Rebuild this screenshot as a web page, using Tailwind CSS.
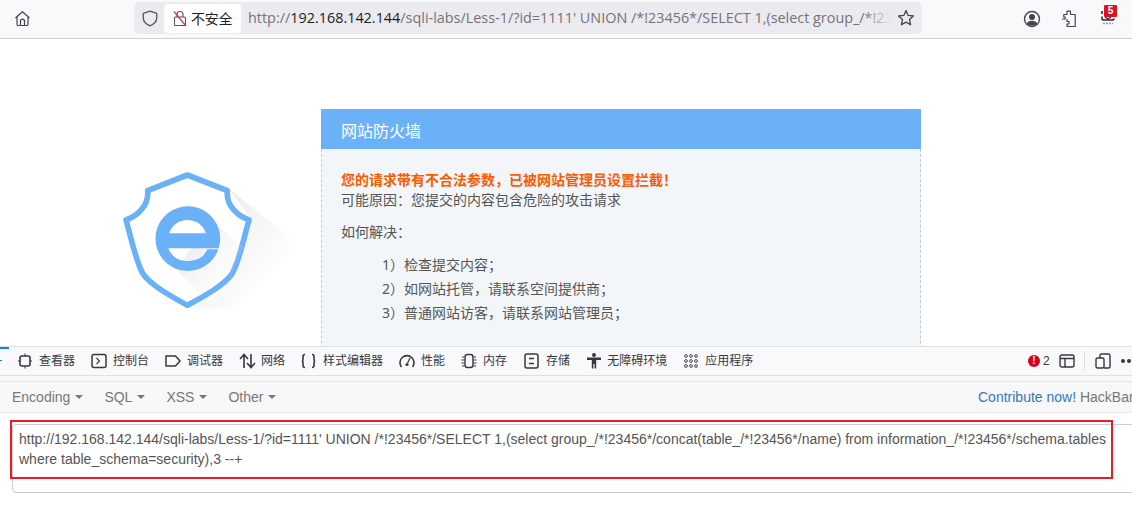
<!DOCTYPE html>
<html>

<head>
  <meta charset="UTF-8" />
  <meta name="viewport" content="width=device-width, initial-scale=1.0" />
  <script src="https://cdn.jsdelivr.net/npm/@tailwindcss/browser@4"></script>
  <title>网站防火墙</title>
</head>

<body class="bg-white overflow-hidden font-['Noto_Sans','Noto_Sans_CJK_SC',sans-serif]">
  <div class="relative w-[1132px] h-[507px] overflow-hidden flex flex-col">
    <!-- browser toolbar -->
    <div class="h-[39px] shrink-0 bg-[#f9f9fb] border-b border-[#cfcfd4] flex items-start">
      <div class="w-[134px] h-[38px] shrink-0 pl-[14px] pt-[10px]">
        <svg width="17" height="17" viewBox="0 0 17 17" fill="none" stroke="#45454f" stroke-width="1.2" stroke-linejoin="round">
          <path d="M1.5 8 8.5 1.8 15.5 8M3 7v7.2q0 1.3 1.3 1.3h8.4q1.3 0 1.3-1.3V7" />
          <path d="M6.5 15.5v-4.3q0-2 2-2t2 2v4.3" />
        </svg>
      </div>
      <div class="w-[788px] h-[32px] mt-[2px] shrink-0 bg-[#ebebef] rounded-[5px] flex items-center pl-[8px] relative">
        <svg class="shrink-0" width="16" height="17" viewBox="0 0 16 17" fill="none" stroke="#55555f" stroke-width="1.3" stroke-linejoin="round">
          <path d="M8 1.2 14.7 3.4V8q0 5-6.7 7.8Q1.3 13 1.3 8V3.4Z" />
        </svg>
        <div class="ml-[6px] w-[77px] h-[29px] shrink-0 bg-white rounded-[4px] flex items-center pl-[9px] text-[14px] text-[#1f1f24] whitespace-nowrap">
          <svg class="shrink-0 mr-[4px]" width="14" height="17" viewBox="0 0 14 17" fill="none" stroke="#55555f" stroke-width="1.1">
            <rect x="1.5" y="7" width="11" height="8.5" rx="1" />
            <path d="M4 7V4.5q0-3 3-3t3 3V7" />
            <path d="M1 1.5 13 16" stroke="#e2325d" stroke-width="1.2" />
          </svg>
          <span class="tracking-[-0.2px]">不安全</span>
        </div>
        <div class="ml-[7px] w-[644px] shrink-0 overflow-hidden whitespace-nowrap text-[14.4px] text-[#73737b] font-['Open_Sans','Noto_Sans',sans-serif]">http://<span class="text-[#1c1c22]">192.168.142.144</span>/sqli-labs/Less-1/?id=1111' UNION /*!23456*/SELECT 1,(select group_/*!23</div>
        <div class="absolute left-[730px] top-0 w-[28px] h-[32px] bg-gradient-to-r from-[#ebebef]/0 to-[#ebebef]"></div>
        <svg class="absolute left-[763px] top-[7px]" width="18" height="18" viewBox="0 0 18 18" fill="none" stroke="#45454f" stroke-width="1.3" stroke-linejoin="round">
          <path d="M9 1.6 11.2 6.4 16.4 7 12.5 10.5 13.6 15.8 9 13.1 4.4 15.8 5.5 10.5 1.6 7 6.8 6.4Z" />
        </svg>
      </div>
      <div class="relative flex-1 h-[38px]">
        <svg class="absolute left-[101px] top-[10px]" width="18" height="18" viewBox="0 0 18 18">
          <circle cx="9" cy="9" r="7.5" fill="none" stroke="#45454f" stroke-width="1.4" />
          <circle cx="9" cy="7" r="3" fill="#45454f" />
          <path d="M3.8 13.5Q5 10.8 9 10.8t5.2 2.7Q12 15.8 9 15.8t-5.2-2.3Z" fill="#45454f" />
        </svg>
        <svg class="absolute left-[139px] top-[10px]" width="16" height="18" viewBox="0 0 16 18" fill="none" stroke="#45454f" stroke-width="1.2" stroke-linejoin="round">
          <path d="M1 9h3.2V7H2.8V4.5H6V1.2h3.5V4.5h4.7V16.5H6V14h2v-2.5H6V9" />
        </svg>
        <svg class="absolute left-[178px] top-[10px]" width="16" height="15" viewBox="0 0 16 15" fill="none" stroke="#2b2b30" stroke-width="1.6">
          <path d="M2 1v3M2 6.500v2Q2 10 4 10h8q2 0 2-1.500" />
          <path d="M5 7l3 2 3-2" stroke-width="1.2" />
          <path d="M3 13.500h10" stroke="#999" stroke-width="1.400" stroke-dasharray="2 1" />
        </svg>
        <div class="absolute left-[182px] top-[5px] w-[13px] h-[12px] bg-[#e0101f] text-white text-[10px] leading-[12px] font-bold text-center rounded-[1px] font-['Liberation_Sans',sans-serif]">5</div>
      </div>
    </div>

    <!-- blocked page -->
    <div class="h-[307px] shrink-0 overflow-hidden flex bg-white">
      <div class="w-[321px] shrink-0 pl-[100px] pt-[111px]">
        <svg width="220" height="190" viewBox="0 0 660 570">
          <defs>
            <linearGradient id="sh" x1="0.2" y1="0.2" x2="0.9" y2="0.8">
              <stop offset="0" stop-color="#dcdcdc" stop-opacity="0.6" />
              <stop offset="1" stop-color="#eeeeee" stop-opacity="0" />
            </linearGradient>
          </defs>
          <path d="M385 115 590 280 395 478 262 475 455 210Z" fill="url(#sh)" />
          <path d="M262 75 382 122C378 165 410 197 447 210 430 270 418 330 398 368 375 405 310 440 262 466 215 440 150 405 127 368 107 330 95 270 78 210 115 197 147 165 143 122Z" fill="white" stroke="#6bb1f8" stroke-width="17" stroke-linejoin="round" />
          <path d="M330 210 430 290 395 370 300 432 230 360Z" fill="url(#sh)" />
          <path fill-rule="evenodd" fill="#6bb1f8" d="M356 295A97 97 0 1 0 355 298L322 298C312 322 290 333 262 333 235 333 215 320 205 295ZM208 250C215 225 238 210 262 210 288 210 310 225 318 250Z" />
        </svg>
      </div>
      <div class="w-[600px] shrink-0 mt-[70px]">
        <div class="h-[40px] bg-[#6bb1f8] pl-[20px] text-[16px] leading-[44px] text-white">网站防火墙</div>
        <div class="h-[240px] bg-[#f3f6f9] border-x border-dashed border-[#c9c9c9] pl-[19px] pt-[21px] text-[14px] leading-[20px] text-[#555]">
          <p class="font-bold text-[#ff5a00]">您的请求带有不合法参数，已被网站管理员设置拦截！</p>
          <p>可能原因：您提交的内容包含危险的攻击请求</p>
          <p class="mt-[12px]">如何解决：</p>
          <ul class="mt-[11px] pl-[41px] leading-[24px]">
            <li>1）检查提交内容；</li>
            <li>2）如网站托管，请联系空间提供商；</li>
            <li>3）普通网站访客，请联系网站管理员；</li>
          </ul>
        </div>
      </div>
    </div>

    <!-- devtools tabs -->
    <div class="relative h-[30px] shrink-0 bg-[#f9f9fb] border-y border-[#e0e0e2] flex items-center pl-[18px] gap-[16px] text-[12px] text-[#38383d] whitespace-nowrap">
      <div class="absolute left-0 top-0 w-[9px] h-[2px] bg-[#0a84ff]"></div>
      <div class="absolute left-0 top-[13px] w-[2px] h-[1px] bg-[#0a84ff]"></div>
      <div class="flex items-center gap-[7px]">
        <svg width="14" height="16" viewBox="0 0 14 16" fill="none" stroke="#38383d" stroke-width="1.6">
          <rect x="2" y="3" width="10" height="10" rx="2" />
          <path d="M7 .5V3M7 13v2.5M0 8h2M12 8h2" stroke-width="1" />
        </svg>
        <span>查看器</span>
      </div>
      <div class="flex items-center gap-[6px]">
        <svg width="16" height="16" viewBox="0 0 16 16" fill="none" stroke="#38383d" stroke-width="1.5">
          <rect x="1" y="1.5" width="14" height="13" rx="2" />
          <path d="M5.5 5 8.5 8 5.5 11" stroke-width="1.1" />
        </svg>
        <span>控制台</span>
      </div>
      <div class="flex items-center gap-[6px]">
        <svg width="16" height="16" viewBox="0 0 16 16" fill="none" stroke="#38383d" stroke-width="1.5" stroke-linejoin="round">
          <path d="M1 3h9.5L15 8l-4.5 5H1Z" />
        </svg>
        <span>调试器</span>
      </div>
      <div class="flex items-center gap-[5px]">
        <svg width="17" height="16" viewBox="0 0 17 16" fill="none" stroke="#38383d" stroke-width="1.6">
          <path d="M5 15V2M1 6l4-4.500L9 6M12 1v13M8 10l4 4.500 4-4.500" />
        </svg>
        <span>网络</span>
      </div>
      <div class="flex items-center gap-[7px]">
        <svg width="15" height="16" viewBox="0 0 15 16" fill="none" stroke="#38383d" stroke-width="1.6">
          <path d="M4 1.5Q2 1.5 2 3.5V6Q2 8 .8 8 2 8 2 10v2.5q0 2 2 2M11 1.5q2 0 2 2V6q0 2 1.2 2Q13 8 13 10v2.5q0 2-2 2" />
        </svg>
        <span>样式编辑器</span>
      </div>
      <div class="flex items-center gap-[6px]">
        <svg width="16" height="16" viewBox="0 0 16 16" fill="none" stroke="#38383d" stroke-width="1.6">
          <path d="M2.5 14A7 7 0 1 1 13.5 14" />
          <path d="M11 5 8.6 10" stroke-width="1.2" />
          <circle cx="8" cy="11.5" r="1.6" fill="#38383d" stroke="none" />
        </svg>
        <span>性能</span>
      </div>
      <div class="flex items-center gap-[6px]">
        <svg width="16" height="16" viewBox="0 0 16 16" fill="none" stroke="#38383d" stroke-width="1.5">
          <rect x="4" y="1.5" width="8" height="13" rx="2.5" />
          <path d="M1 4h2M.5 7h2.500M.5 10h2.500M1 13h2M13 4h2M13 7h2.500M13 10h2.500M13 13h2" stroke-width="1" />
        </svg>
        <span>内存</span>
      </div>
      <div class="ml-[1px] flex items-center gap-[7px]">
        <svg width="15" height="16" viewBox="0 0 15 16" fill="none" stroke="#38383d" stroke-width="1.5">
          <rect x="1" y="1" width="13" height="14" rx="2" />
          <path d="M5 5.500h5M5 10.500h5" />
        </svg>
        <span>存储</span>
      </div>
      <div class="ml-[1px] flex items-center gap-[6px]">
        <svg width="14" height="16" viewBox="0 0 14 16" fill="#38383d">
          <circle cx="7" cy="2" r="2" />
          <path d="M0 4.500h14V7H9.200v8.500H7.600V11H6.400v4.500H4.800V7H0Z" />
        </svg>
        <span>无障碍环境</span>
      </div>
      <div class="ml-[1px] flex items-center gap-[7px]">
        <svg width="14" height="14" viewBox="0 0 14 14" fill="none" stroke="#38383d" stroke-width="0.9">
          <circle cx="2" cy="2" r="1.400" /><circle cx="7" cy="2" r="1.400" /><circle cx="12" cy="2" r="1.400" />
          <circle cx="2" cy="7" r="1.400" /><circle cx="7" cy="7" r="1.400" /><circle cx="12" cy="7" r="1.400" />
          <circle cx="2" cy="12" r="1.400" /><circle cx="7" cy="12" r="1.400" /><circle cx="12" cy="12" r="1.400" />
        </svg>
        <span>应用程序</span>
      </div>
      <div class="absolute left-[1028px] top-0 h-[28px] w-[104px] flex items-center overflow-hidden">
        <div class="w-[12px] h-[12px] shrink-0 rounded-full bg-[#d70022] text-white text-[10px] leading-[12px] font-bold text-center font-['Liberation_Sans',sans-serif]">!</div>
        <span class="ml-[3px] w-[8px] shrink-0 text-[12px] font-['Liberation_Sans',sans-serif]">2</span>
        <svg class="ml-[8px] shrink-0" width="16" height="14" viewBox="0 0 16 14" fill="none" stroke="#38383d" stroke-width="1.4">
          <rect x="1" y="1" width="14" height="12" rx="2" />
          <path d="M1 4.500h14M6 4.500V13" />
        </svg>
        <div class="ml-[9px] w-px h-[20px] shrink-0 bg-[#e0e0e2]"></div>
        <svg class="ml-[10px] shrink-0" width="16" height="16" viewBox="0 0 16 16" fill="none" stroke="#38383d" stroke-width="1.4">
          <rect x="1" y="5" width="8" height="10" rx="1.500" />
          <path d="M5 5V2.500Q5 1 6.500 1h7Q15 1 15 2.500v11q0 1.500-1.500 1.500H9" />
        </svg>
        <div class="ml-[10px] flex gap-[2px] shrink-0">
          <span class="w-[4px] h-[4px] rounded-full bg-[#38383d]"></span>
          <span class="w-[4px] h-[4px] rounded-full bg-[#38383d]"></span>
          <span class="w-[4px] h-[4px] rounded-full bg-[#38383d]"></span>
        </div>
      </div>
    </div>

    <!-- hackbar -->
    <div class="h-[5px] shrink-0 bg-[#f9f9fb]"></div>
    <div class="h-[32px] shrink-0 bg-[#f8f8f8] border-y border-[#e7e7e7] flex items-center pl-[12px] text-[14px] text-[#777] whitespace-nowrap font-['Liberation_Sans',sans-serif] relative">
      <span>Encoding</span><span class="ml-[5px] w-0 h-0 border-x-[4px] border-x-transparent border-t-[4px] border-t-[#777]"></span>
      <span class="ml-[21px]">SQL</span><span class="ml-[5px] w-0 h-0 border-x-[4px] border-x-transparent border-t-[4px] border-t-[#777]"></span>
      <span class="ml-[21px]">XSS</span><span class="ml-[5px] w-0 h-0 border-x-[4px] border-x-transparent border-t-[4px] border-t-[#777]"></span>
      <span class="ml-[21px]">Other</span><span class="ml-[5px] w-0 h-0 border-x-[4px] border-x-transparent border-t-[4px] border-t-[#777]"></span>
      <span class="absolute left-[978px]"><span class="text-[#337ab7]">Contribute now!</span> HackBar</span>
    </div>
    <div class="flex-1 bg-white pl-[12px] pt-[11px]">
      <div class="w-[1140px] h-[69px] border border-[#ccc] rounded-[4px] pl-[6px] pt-[4px] pr-[26px] text-[14px] leading-[20px] text-[#555] font-['Liberation_Sans',sans-serif]">
        <div class="w-[1100px]">http://192.168.142.144/sqli-labs/Less-1/?id=1111' UNION /*!23456*/SELECT 1,(select group_/*!23456*/concat(table_/*!23456*/name) from information_/*!23456*/schema.tables where table_schema=security),3 --+</div>
      </div>
    </div>
    <!-- annotation box drawn over the screenshot -->
    <div class="absolute left-[10px] top-[420px] w-[1103px] h-[59px] border-2 border-[#ed1c24]"></div>
  </div>
</body>

</html>
